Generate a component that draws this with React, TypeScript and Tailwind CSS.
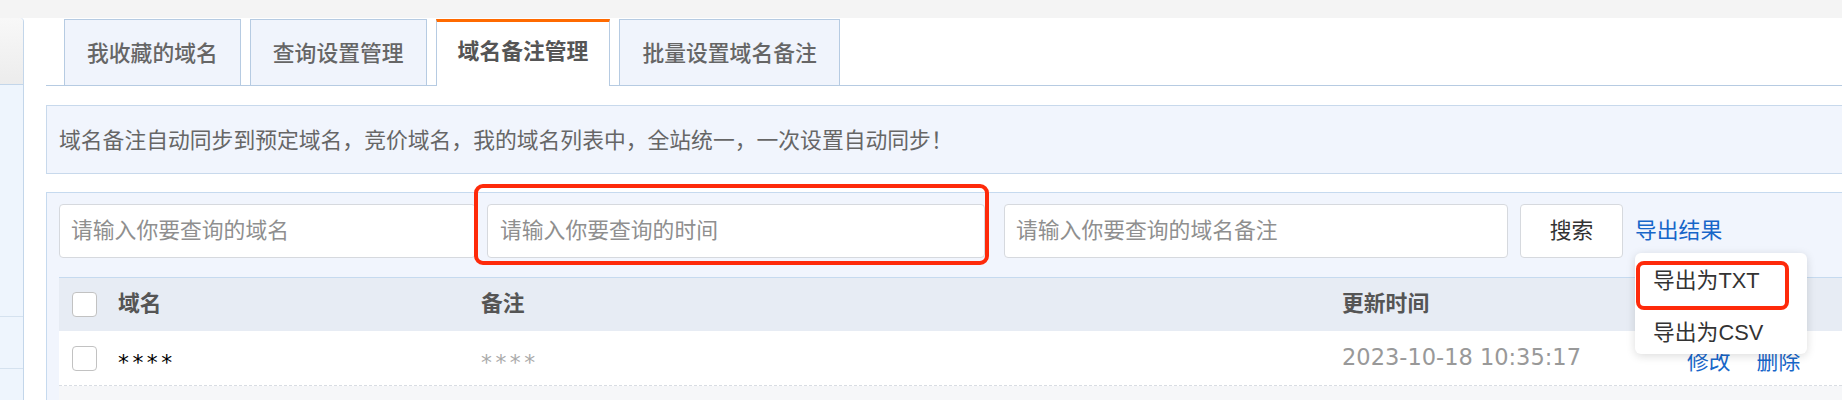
import { useState } from 'react'

const tabs = ['我收藏的域名', '查询设置管理', '域名备注管理', '批量设置域名备注']

const rows = [{ domain: '****', note: '****', updated: '2023-10-18 10:35:17' }]

export default function App() {
  const [active, setActive] = useState(2)

  return (
    <div className="h-[400px] w-[1842px] overflow-hidden bg-white text-[21.8px] font-['Liberation_Sans','Noto_Sans_CJK_SC',sans-serif]">
      <div className="h-[18px] bg-[#f4f4f4]" />

      <div className="flex">
        {/* Sidebar */}
        <aside className="w-[24px] shrink-0 h-[382px] border-r border-[#c3d6ea] rounded-tr-[4px] bg-[#eef5fd]">
          <div className="h-[67px] rounded-tr-[4px] border-b border-[#c3d6ea] bg-gradient-to-b from-[#f8f8f8] to-[#ececec]" />
          <div className="h-[232px] border-b border-[#d5e2ef]" />
          <div className="h-[52px] border-b border-[#d5e2ef]" />
        </aside>

        <main className="flex-1 pl-[22px]">
          {/* Tabs */}
          <div className="flex gap-[9px] pl-[18px] pt-[1px] border-b border-[#b6cbe2]">
            {tabs.map((t, i) =>
              i === active ? (
                <button
                  key={t}
                  onClick={() => setActive(i)}
                  className="h-[67px] -mb-px px-[21px] bg-white border-x border-[#b6cbe2] border-t-[3px] border-t-[#ff6a00] font-bold text-[#555] leading-none pb-[4px]"
                >
                  {t}
                </button>
              ) : (
                <button
                  key={t}
                  onClick={() => setActive(i)}
                  className="h-[66px] px-[22px] bg-[#f0f4fc] border border-b-0 border-[#b6cbe2] font-medium text-[#666] leading-none pt-[3px]"
                >
                  {t}
                </button>
              ),
            )}
          </div>

          {/* Notice */}
          <div className="mt-[19px] h-[69px] flex items-center pl-[12px] pt-[4px] bg-[#f1f5fd] border-y border-l border-[#c8d9ec] text-[#666]">
            域名备注自动同步到预定域名，竞价域名，我的域名列表中，全站统一，一次设置自动同步！
          </div>

          {/* Search panel */}
          <div className="mt-[18px] bg-[#f1f5fd] border-t border-l border-[#c6daef] pl-[12px] pt-[11px]">
            <div className="flex items-center h-[54px]">
              <input
                placeholder="请输入你要查询的域名"
                className="w-[417px] h-[54px] px-[11px] bg-white border border-[#d6d9de] rounded-[4px] outline-none placeholder:text-[#8f8f8f]"
              />
              <div className="relative ml-[11px]">
                <input
                  placeholder="请输入你要查询的时间"
                  className="w-[498px] h-[54px] px-[12px] bg-white border border-[#d6d9de] rounded-[4px] outline-none placeholder:text-[#8f8f8f]"
                />
                <div className="absolute left-[-13px] top-[-20px] w-[515px] h-[81px] border-[4px] border-[#fe2a0a] rounded-[9px] pointer-events-none" />
              </div>
              <input
                placeholder="请输入你要查询的域名备注"
                className="ml-[19px] w-[504px] h-[54px] px-[11px] bg-white border border-[#d6d9de] rounded-[4px] outline-none placeholder:text-[#8f8f8f]"
              />
              <button className="ml-[12px] w-[103px] h-[54px] bg-white border border-[#d6d9de] rounded-[4px] text-[#333]">
                搜索
              </button>
              <div className="relative ml-[12px] h-[54px] flex items-center">
                <a className="text-[#1766c9] cursor-pointer">导出结果</a>
                <div className="absolute left-0 top-[49px] z-10 w-[172px] h-[101px] pt-[2px] bg-white rounded-[6px] shadow-[0_2px_10px_rgba(0,0,0,0.14)] text-[#333]">
                  <div className="h-[52px] flex items-center pl-[18px]">导出为TXT</div>
                  <div className="h-[52px] flex items-center pl-[18px]">导出为CSV</div>
                  <div className="absolute left-[1px] top-[8px] w-[153px] h-[49px] border-[4px] border-[#fe2a0a] rounded-[8px]" />
                </div>
              </div>
            </div>

            {/* Table */}
            <div className="mt-[19px] bg-white">
              <div className="flex items-center h-[54px] bg-[#e7ecf4] border-t border-[#c6daef] font-bold text-[#555]">
                <div className="w-[59px] pl-[13px]">
                  <span className="block w-[25px] h-[25px] bg-white border border-[#c2c2c2] rounded-[4px]" />
                </div>
                <div className="w-[363px]">域名</div>
                <div className="w-[861px]">备注</div>
                <div className="w-[345px]">更新时间</div>
                <div className="flex-1">操作</div>
              </div>
              {rows.map((r) => (
                <div
                  key={r.updated}
                  className="flex items-center h-[55px] border-b border-dashed border-[#d9dde3]"
                >
                  <div className="w-[59px] pl-[13px]">
                    <span className="block w-[25px] h-[25px] bg-white border border-[#c2c2c2] rounded-[4px]" />
                  </div>
                  <div className="w-[363px] pt-[10px] tracking-[3.5px] font-['DejaVu_Sans',sans-serif] text-black">
                    {r.domain}
                  </div>
                  <div className="w-[861px] pt-[10px] tracking-[3.5px] font-['DejaVu_Sans',sans-serif] text-[#aaa]">
                    {r.note}
                  </div>
                  <div className="w-[345px] text-[22.5px] text-[#999] font-['DejaVu_Sans',sans-serif]">
                    {r.updated}
                  </div>
                  <div className="flex-1 flex gap-[26px] pt-[8px] text-[#1766c9]">
                    <a>修改</a>
                    <a>删除</a>
                  </div>
                </div>
              ))}
              <div className="h-[20px] bg-[#f6f7f9]" />
            </div>
          </div>
        </main>
      </div>
    </div>
  )
}
